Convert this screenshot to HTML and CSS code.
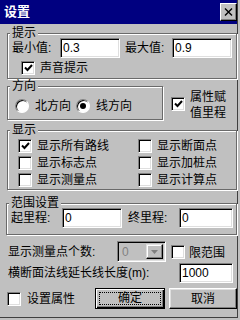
FILE: index.html
```html
<!DOCTYPE html>
<html lang="zh">
<head>
    <meta charset="UTF-8">
    <title>设置</title>
    <link rel="stylesheet" href="styles.css">
</head>
<body>
    <div class="window">
        <div class="titlebar">
            <span class="title">设置</span>
            <span class="close">
                <svg width="9" height="8" viewBox="0 0 9 8"><path d="M1 0.5 L8 7.5 M8 0.5 L1 7.5" stroke="#000" stroke-width="1.4" fill="none"/></svg>
            </span>
        </div>

        <!-- 提示 -->
        <fieldset class="group group-tip">
            <legend>提示</legend>
            <div class="row row-edit">
                <label class="lbl lbl-min">最小值:</label>
                <input class="edit edit-min" type="text" value="0.3">
                <label class="lbl lbl-max">最大值:</label>
                <input class="edit edit-max" type="text" value="0.9">
            </div>
            <div class="opt opt-sound">
                <span class="check on"><svg width="9" height="8" viewBox="0 0 9 8"><polyline points="1,3.5 3.5,6 8,1" stroke="#000" stroke-width="2" fill="none"/></svg></span>
                <span>声音提示</span>
            </div>
        </fieldset>

        <!-- 方向 -->
        <div class="dir-row">
            <fieldset class="group group-dir">
                <legend>方向</legend>
                <div class="radios">
                    <span class="radio"></span><span class="radio-text">北方向</span>
                    <span class="radio on"></span><span class="radio-text">线方向</span>
                </div>
            </fieldset>
            <div class="attr">
                <span class="check on"><svg width="9" height="8" viewBox="0 0 9 8"><polyline points="1,3.5 3.5,6 8,1" stroke="#000" stroke-width="2" fill="none"/></svg></span>
                <span class="attr-text">属性赋<br>值里程</span>
            </div>
        </div>

        <!-- 显示 -->
        <fieldset class="group group-show">
            <legend>显示</legend>
            <div class="show-grid">
                <div class="opt"><span class="check on"><svg width="9" height="8" viewBox="0 0 9 8"><polyline points="1,3.5 3.5,6 8,1" stroke="#000" stroke-width="2" fill="none"/></svg></span><span>显示所有路线</span></div>
                <div class="opt"><span class="check"></span><span>显示断面点</span></div>
                <div class="opt"><span class="check"></span><span>显示标志点</span></div>
                <div class="opt"><span class="check"></span><span>显示加桩点</span></div>
                <div class="opt"><span class="check"></span><span>显示测量点</span></div>
                <div class="opt"><span class="check"></span><span>显示计算点</span></div>
            </div>
        </fieldset>

        <!-- 范围设置 -->
        <fieldset class="group group-range">
            <legend>范围设置</legend>
            <div class="row row-edit">
                <label class="lbl lbl-start">起里程:</label>
                <input class="edit edit-start" type="text" value="0">
                <label class="lbl lbl-end">终里程:</label>
                <input class="edit edit-end" type="text" value="0">
            </div>
        </fieldset>

        <div class="line line-count">
            <span class="lbl lbl-count">显示测量点个数:</span>
            <div class="combo">
                <span class="combo-val">0</span>
                <span class="combo-btn"><svg width="7" height="4" viewBox="0 0 7 4"><path d="M0 0 H7 L3.5 4 Z" fill="#808080"/></svg></span>
            </div>
            <span class="check check-limit"></span>
            <span>限范围</span>
        </div>

        <div class="line line-ext">
            <span class="lbl lbl-ext">横断面法线延长线长度(m):</span>
            <input class="edit edit-ext" type="text" value="1000">
        </div>

        <div class="line line-buttons">
            <span class="check"></span>
            <span class="lbl lbl-attr">设置属性</span>
            <button class="btn btn-default"><span class="focus">确定</span></button>
            <button class="btn btn-cancel">取消</button>
        </div>
    </div>
</body>
</html>
```

FILE: styles.css
```css
body {
    margin: 0;
    background: #c0c0c0;
    font-family: "Liberation Sans", "Noto Sans CJK SC", sans-serif;
    font-size: 12px;
    color: #000;
}
.window {
    width: 238px;
    height: 318px;
    box-sizing: border-box;
    border-right: 1px solid #404040;
    border-bottom: 1px solid #404040;
}
.titlebar {
    height: 24px;
    background: #000080;
    display: flex;
    align-items: center;
    justify-content: space-between;
    padding-left: 4px;
}
.title {
    color: #fff;
    font-weight: bold;
    font-size: 13px;
    line-height: 16px;
}
.close {
    width: 17px;
    height: 18px;
    box-sizing: border-box;
    background: #c0c0c0;
    border: 1px solid;
    border-color: #fff #000 #000 #fff;
    box-shadow: inset -1px -1px 0 #808080;
    display: flex;
    align-items: center;
    justify-content: center;
}

/* group boxes */
.group {
    margin: 0 0 0 7px;
    padding: 0 4px;
    width: 230px;
    box-sizing: border-box;
    border: 1px solid #6a6a6a;
    box-shadow: inset 1px 1px 0 #fff, 1px 1px 0 #fff;
    min-width: 0;
}
.group legend {
    padding: 0 2px;
    margin-left: -2px;
    height: 13px;
    line-height: 13px;
    background: #c0c0c0;
}
.group-tip {
    margin-top: 3px;
    padding-bottom: 3px;
}
.row {
    display: flex;
    align-items: center;
}
.row-edit {
    margin-top: -2px;
}
.lbl {
    flex: none;
    line-height: 14px;
    white-space: nowrap;
}
.lbl-min { width: 48px; }
.lbl-max { width: 47px; margin-left: 5px; }
.lbl-start { width: 51px; }
.lbl-end { width: 51px; margin-left: 6px; }
.lbl-count { width: 109px; }
.lbl-ext { width: 171px; }
.lbl-attr { width: 68px; margin-left: 6px; }

.edit {
    box-sizing: border-box;
    height: 20px;
    margin: 0;
    padding: 0 0 0 2px;
    border: 1px solid;
    border-color: #808080 #fff #fff #808080;
    box-shadow: inset 1px 1px 0 #000, inset -1px -1px 0 #dfdfdf;
    background: #fff;
    font: inherit;
    color: #000;
    outline: none;
}
.edit-min, .edit-max { width: 60px; }
.edit-start { width: 60px; }
.edit-end, .edit-ext { width: 54px; }

.check {
    flex: none;
    width: 14px;
    height: 14px;
    box-sizing: border-box;
    border: 1px solid;
    border-color: #808080 #fff #fff #808080;
    box-shadow: inset 1px 1px 0 #000, inset -1px -1px 0 #dfdfdf;
    background: #fff;
    display: flex;
    align-items: center;
    justify-content: center;
}
.opt {
    display: flex;
    align-items: center;
    height: 14px;
    line-height: 14px;
    white-space: nowrap;
}
.opt .check {
    margin-right: 5px;
}
.opt-sound {
    margin-top: 3px;
    padding-left: 9px;
}

/* 方向 */
.dir-row {
    display: flex;
    align-items: flex-start;
    margin-top: 1px;
}
.group-dir {
    width: 156px;
    padding-bottom: 6px;
}
.radios {
    display: flex;
    align-items: center;
    height: 14px;
    margin-top: 6px;
    padding-left: 3px;
}
.radio {
    flex: none;
    width: 14px;
    height: 14px;
    box-sizing: border-box;
    border-radius: 50%;
    border: 1px solid;
    border-color: #808080 #fff #fff #808080;
    box-shadow: inset 1px 1px 0 #000;
    background: #fff;
    display: flex;
    align-items: center;
    justify-content: center;
}
.radio.on::after {
    content: "";
    width: 6px;
    height: 6px;
    border-radius: 50%;
    background: #000;
}
.radio-text {
    margin-left: 6px;
    width: 41px;
    line-height: 14px;
}
.attr {
    display: flex;
    align-items: flex-start;
    margin: 9px 0 0 8px;
}
.attr .check {
    margin-top: 8px;
}
.attr-text {
    margin-left: 5px;
    line-height: 16px;
}

/* 显示 */
.group-show {
    margin-top: 3px;
    padding-bottom: 2px;
}
.show-grid {
    display: grid;
    grid-template-columns: 120px 1fr;
    row-gap: 3px;
    margin-top: 2px;
    padding-left: 6px;
}

/* 范围设置 */
.group-range {
    margin-top: 7px;
    margin-left: 6px;
    width: 231px;
    padding-bottom: 6px;
}

/* bottom lines */
.line {
    display: flex;
    align-items: center;
    margin-left: 8px;
    white-space: nowrap;
}
.line-count {
    margin-top: 6px;
    height: 21px;
}
.combo {
    width: 49px;
    height: 21px;
    box-sizing: border-box;
    border: 1px solid;
    border-color: #808080 #fff #fff #808080;
    box-shadow: inset 1px 1px 0 #000, inset -1px -1px 0 #dfdfdf;
    display: flex;
    align-items: center;
    padding: 2px;
}
.combo-val {
    flex: 1;
    color: #808080;
    padding-left: 2px;
}
.combo-btn {
    width: 17px;
    height: 15px;
    box-sizing: border-box;
    border: 1px solid;
    border-color: #dfdfdf #000 #000 #dfdfdf;
    box-shadow: inset -1px -1px 0 #808080, inset 1px 1px 0 #fff;
    display: flex;
    align-items: center;
    justify-content: center;
}
.check-limit {
    margin: 0 4px 0 5px;
}
.line-ext {
    margin-top: 1px;
    height: 20px;
}
.line-buttons {
    margin-top: 5px;
    margin-left: 7px;
    height: 21px;
}

.btn {
    flex: none;
    height: 21px;
    box-sizing: border-box;
    margin: 0;
    padding: 0;
    background: #c0c0c0;
    border: 1px solid;
    border-color: #fff #000 #000 #fff;
    box-shadow: inset -1px -1px 0 #808080, inset 1px 1px 0 #dfdfdf;
    font: inherit;
    color: #000;
    line-height: 14px;
}
.btn-default {
    width: 70px;
    display: flex;
    padding: 3px;
    border-color: #000;
    box-shadow: inset 1px 1px 0 #fff, inset -1px -1px 0 #000, inset -2px -2px 0 #808080;
}
.focus {
    flex: 1;
    border: 1px dotted #000;
    line-height: 11px;
    text-align: center;
}
.btn-cancel {
    width: 68px;
    margin-left: 4px;
}
```
